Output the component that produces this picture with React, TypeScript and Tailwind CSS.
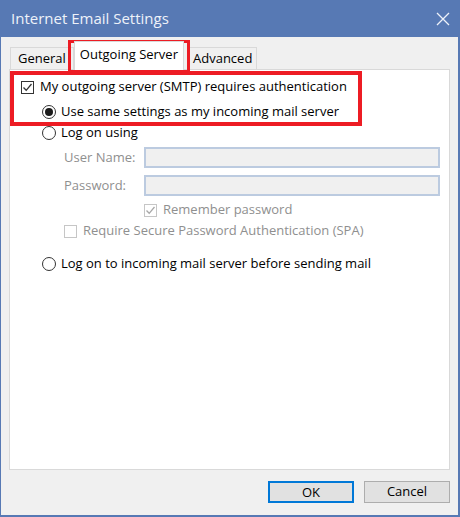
import React from 'react';

const font = { fontFamily: '"Open Sans", "Noto Sans", sans-serif' };

const CheckBox = ({ checked, disabled }: { checked?: boolean; disabled?: boolean }) => (
  <span
    className={`flex h-[13px] w-[13px] shrink-0 items-center justify-center border bg-white ${
      disabled ? 'border-[#c6c6c6]' : 'border-[#333333]'
    }`}
  >
    {checked && (
      <svg width="11" height="11" viewBox="0 0 11 11">
        <path
          d="M1.5 5.5 L4.2 8.3 L9.5 2"
          fill="none"
          stroke={disabled ? '#a8a8a8' : '#333333'}
          strokeWidth="1.3"
        />
      </svg>
    )}
  </span>
);

const Radio = ({ checked }: { checked?: boolean }) => (
  <span className="flex h-[14px] w-[14px] shrink-0 items-center justify-center rounded-full border border-[#333333] bg-white">
    {checked && <span className="h-[8px] w-[8px] rounded-full bg-[#1a1a1a]" />}
  </span>
);

const Field = ({ label }: { label: string }) => (
  <div className="flex h-[21px] items-center">
    <span className="w-[80px] pl-[54px] box-content text-[#8f8f8f]">{label}</span>
    <div className="h-[21px] w-[296px] border-2 border-[#bccbe0] bg-[#f0f0f0]" />
  </div>
);

export default function App() {
  return (
    <div
      className="relative flex h-[517px] w-[460px] flex-col border-b-2 border-l border-r-2 border-[#5779b4] bg-[#f0f0f0] text-[13px] text-black"
      style={font}
    >
      {/* title bar */}
      <div className="-ml-px -mr-[2px] flex h-[37px] shrink-0 items-center justify-between bg-[#5779b4] pl-[11px] pr-[10px]">
        <span className="text-[15px] text-[#eef2f9]">Internet Email Settings</span>
        <svg width="14" height="14" viewBox="0 0 14 14">
          <path d="M1 1 L13 13 M13 1 L1 13" stroke="#eef2f9" strokeWidth="1.3" />
        </svg>
      </div>

      {/* tabs */}
      <div className="mt-[4px] flex h-[28px] items-end pl-[9px]">
        <div className="flex h-[22px] items-center border border-b-0 border-[#d9d9d9] px-[7px]">
          General
        </div>
        <div className="relative z-10 -mb-px flex h-[29px] items-center border border-b-0 border-[#d9d9d9] bg-white px-[5px] pb-[3px]">
          Outgoing Server
        </div>
        <div className="ml-[4px] flex h-[22px] items-center border border-b-0 border-[#d9d9d9] px-[4px]">
          Advanced
        </div>
      </div>

      {/* panel */}
      <div className="ml-[8px] h-[401px] w-[441px] border border-[#d9d9d9] bg-white">
        <div className="mt-[6px] flex h-[22px] items-center gap-[6px] pl-[11px]">
          <CheckBox checked />
          <span>My outgoing server (SMTP) requires authentication</span>
        </div>
        <div className="mt-[3px] flex h-[22px] items-center gap-[5px] pl-[32px]">
          <Radio checked />
          <span>Use same settings as my incoming mail server</span>
        </div>
        <div className="flex h-[20px] items-center gap-[5px] pl-[32px]">
          <Radio />
          <span>Log on using</span>
        </div>
        <div className="mt-[4px]">
          <Field label="User Name:" />
        </div>
        <div className="mt-[7px]">
          <Field label="Password:" />
        </div>
        <div className="mt-[4px] flex h-[20px] items-center gap-[6px] pl-[134px] text-[#8f8f8f]">
          <CheckBox checked disabled />
          <span>Remember password</span>
        </div>
        <div className="mt-[1px] flex h-[20px] items-center gap-[6px] pl-[54px] text-[#8f8f8f]">
          <CheckBox disabled />
          <span>Require Secure Password Authentication (SPA)</span>
        </div>
        <div className="mt-[13px] flex h-[20px] items-center gap-[5px] pl-[32px]">
          <Radio />
          <span>Log on to incoming mail server before sending mail</span>
        </div>
      </div>

      {/* buttons */}
      <div className="mt-[11px] flex justify-end gap-[10px] pr-[8px]">
        <button className="h-[22px] w-[86px] border-2 border-[#0078d7] bg-[#e1e1e1]">OK</button>
        <button className="h-[22px] w-[86px] border border-[#adadad] bg-[#e1e1e1]">Cancel</button>
      </div>

      {/* annotation boxes */}
      <div className="pointer-events-none absolute left-[67px] top-[40px] h-[33px] w-[122px] border-[3px] border-[#ed1c24]" />
      <div className="pointer-events-none absolute left-[9px] top-[71px] h-[55px] w-[352px] border-[4px] border-[#ed1c24]" />
    </div>
  );
}
